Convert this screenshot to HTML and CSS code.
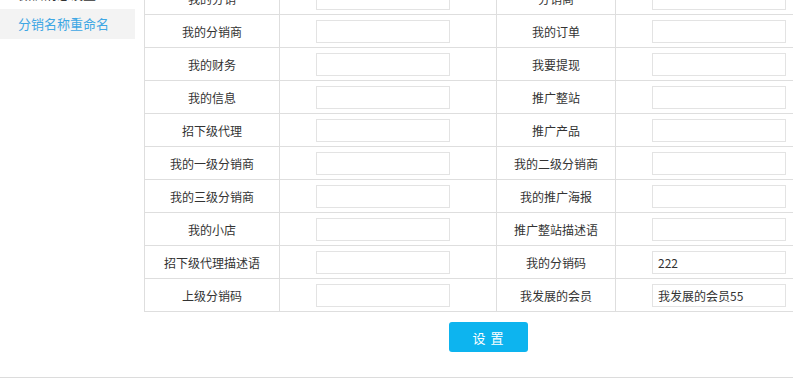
FILE: index.html
```html
<!DOCTYPE html>
<html lang="zh-CN">
<head>
<meta charset="utf-8">
<title>分销设置</title>
<link rel="stylesheet" href="styles.css">
</head>
<body>
<div class="page">
  <aside class="sidebar">
    <div class="side-item">微信消息设置</div>
    <div class="side-item active">分销名称重命名</div>
  </aside>
  <main class="main">
    <table class="form-table">
      <colgroup>
        <col class="c-label1"><col class="c-input"><col class="c-label2"><col class="c-input">
      </colgroup>
      <tr><td class="lbl">我的分销</td><td><input class="ipt" type="text"></td><td class="lbl">分销商</td><td><input class="ipt" type="text"></td></tr>
      <tr><td class="lbl">我的分销商</td><td><input class="ipt" type="text"></td><td class="lbl">我的订单</td><td><input class="ipt" type="text"></td></tr>
      <tr><td class="lbl">我的财务</td><td><input class="ipt" type="text"></td><td class="lbl">我要提现</td><td><input class="ipt" type="text"></td></tr>
      <tr><td class="lbl">我的信息</td><td><input class="ipt" type="text"></td><td class="lbl">推广整站</td><td><input class="ipt" type="text"></td></tr>
      <tr><td class="lbl">招下级代理</td><td><input class="ipt" type="text"></td><td class="lbl">推广产品</td><td><input class="ipt" type="text"></td></tr>
      <tr><td class="lbl">我的一级分销商</td><td><input class="ipt" type="text"></td><td class="lbl">我的二级分销商</td><td><input class="ipt" type="text"></td></tr>
      <tr><td class="lbl">我的三级分销商</td><td><input class="ipt" type="text"></td><td class="lbl">我的推广海报</td><td><input class="ipt" type="text"></td></tr>
      <tr><td class="lbl">我的小店</td><td><input class="ipt" type="text"></td><td class="lbl">推广整站描述语</td><td><input class="ipt" type="text"></td></tr>
      <tr><td class="lbl">招下级代理描述语</td><td><input class="ipt" type="text"></td><td class="lbl">我的分销码</td><td><input class="ipt" type="text" value="222"></td></tr>
      <tr><td class="lbl">上级分销码</td><td><input class="ipt" type="text"></td><td class="lbl">我发展的会员</td><td><input class="ipt" type="text" value="我发展的会员55"></td></tr>
    </table>
    <div class="actions">
      <button class="btn" type="button">设 置</button>
    </div>
  </main>
</div>
<div class="footer-line"></div>
</body>
</html>
```

FILE: styles.css
```css
html, body {
  margin: 0;
  padding: 0;
  background: #fff;
  overflow: hidden;
  font-family: "Microsoft YaHei", "Noto Sans CJK SC", "Noto Sans", sans-serif;
  color: #333;
}

.page {
  display: flex;
  margin-top: -21px;
  width: 900px;
}

.sidebar {
  width: 135px;
  flex: 0 0 135px;
}

.side-item {
  height: 30px;
  line-height: 29px;
  padding-left: 18px;
  font-size: 13px;
  color: #333;
}

.side-item.active {
  background: #f3f3f3;
  color: #3fa7e4;
}

.main {
  margin-left: 9px;
  padding-top: 2px;
}

.form-table {
  border-collapse: collapse;
  width: 688px;
  table-layout: fixed;
}

.c-label1 { width: 135px; }
.c-input { width: 217px; }
.c-label2 { width: 119px; }

.form-table td {
  border: 1px solid #dedede;
  height: 32px;
  padding: 0;
  font-size: 12px;
  vertical-align: middle;
}

.form-table td.lbl {
  text-align: center;
  color: #333;
}

.form-table td:not(.lbl) {
  padding-left: 36px;
}

.ipt {
  box-sizing: border-box;
  display: block;
  width: 134px;
  height: 23px;
  border: 1px solid #e3e3e3;
  padding: 0 5px;
  font-family: inherit;
  font-size: 12px;
  color: #333;
  outline: none;
  margin-top: 1px;
}

.actions {
  display: flex;
  justify-content: center;
  padding-top: 10px;
}

.btn {
  width: 79px;
  height: 30px;
  border: none;
  border-radius: 3px;
  background: #0db4ef;
  color: #fff;
  font-family: inherit;
  font-size: 13px;
  letter-spacing: 1px;
  cursor: pointer;
}

.footer-line {
  margin-top: 25px;
  height: 1px;
  background: #dcdcdc;
}
```
